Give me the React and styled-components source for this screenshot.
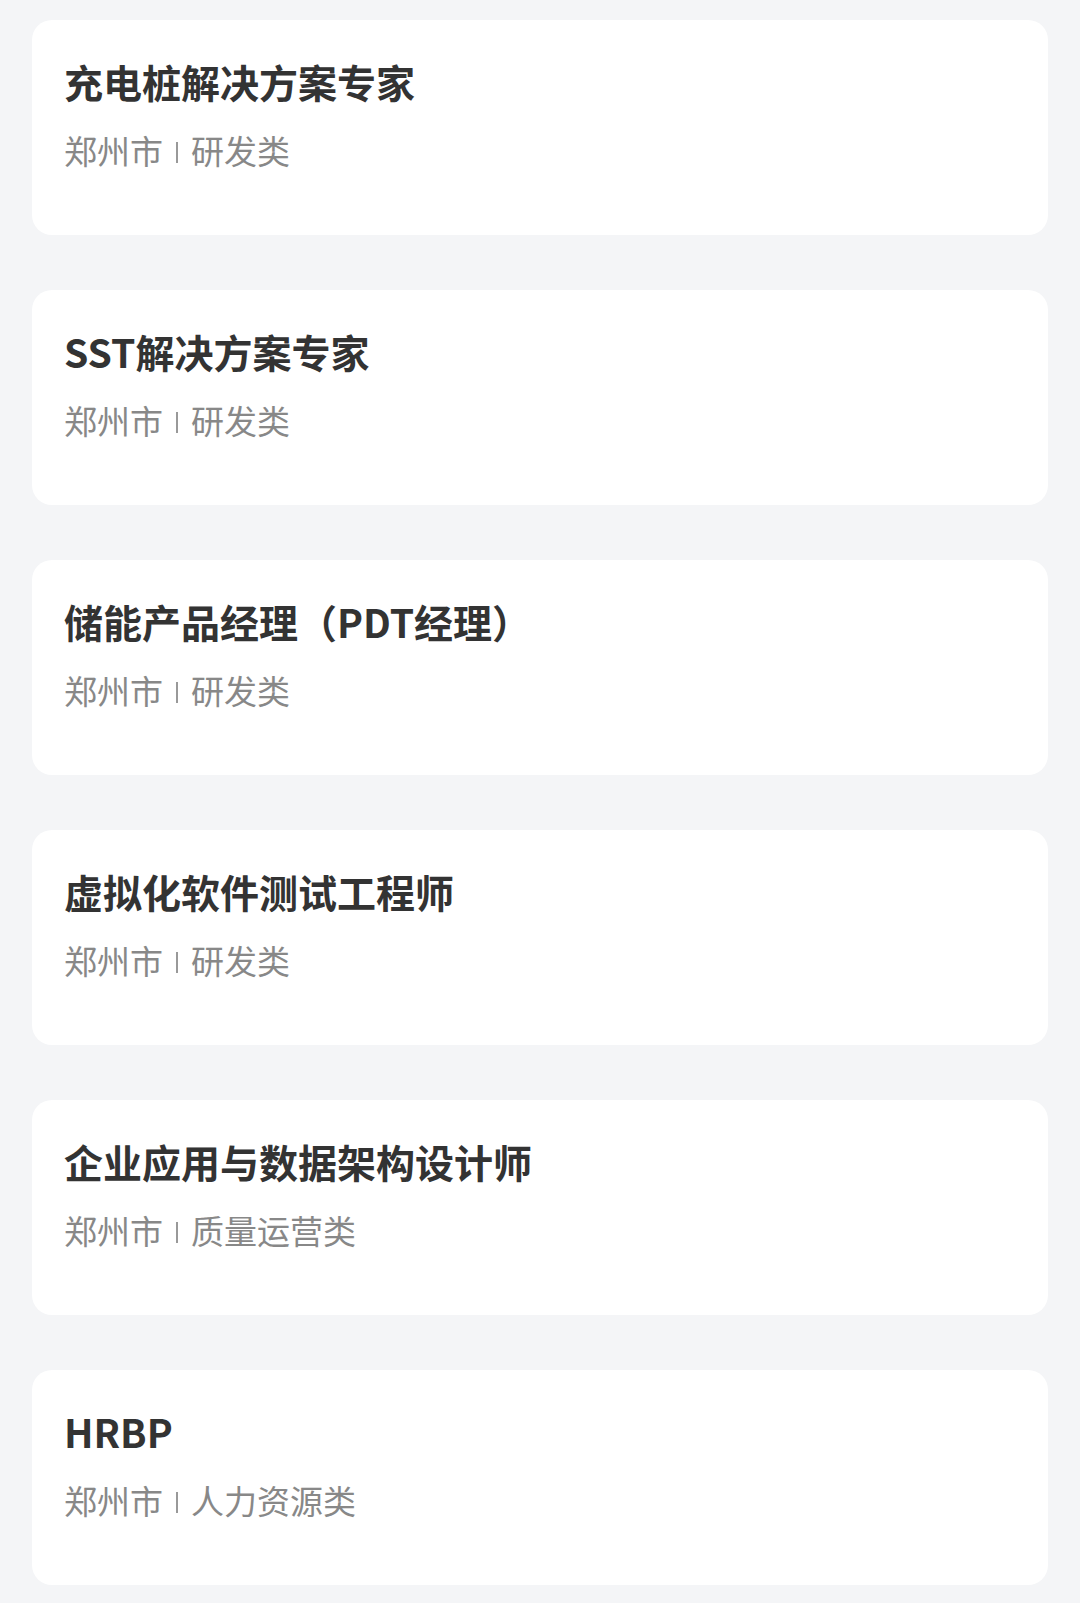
import React from "react";
import styled, { createGlobalStyle } from "styled-components";

const Global = createGlobalStyle`
  html, body { margin: 0; padding: 0; background: #f4f5f7; }
  body { font-family: "Noto Sans CJK SC", "Noto Sans", sans-serif; }
`;

const List = styled.div`
  display: flex;
  flex-direction: column;
  gap: 55px;
  padding: 20px 32px 20px;
`;

const Card = styled.div`
  background: #ffffff;
  border-radius: 20px;
  height: 215px;
  box-sizing: border-box;
  padding: 38px 32px 0;
  display: flex;
  flex-direction: column;
  gap: 26px;
`;

const Title = styled.div`
  font-size: 39px;
  line-height: 1.2;
  font-weight: 700;
  color: #333333;
`;

const Meta = styled.div`
  font-size: 33px;
  line-height: 1.2;
  font-weight: 400;
  color: #888888;
  display: flex;
  align-items: center;
`;

const Divider = styled.span`
  display: inline-block;
  width: 2px;
  height: 21px;
  background: #999999;
  margin: 3px 13px 0;
`;

const jobs = [
  { title: "充电桩解决方案专家", city: "郑州市", type: "研发类" },
  { title: "SST解决方案专家", city: "郑州市", type: "研发类" },
  { title: "储能产品经理（PDT经理）", city: "郑州市", type: "研发类" },
  { title: "虚拟化软件测试工程师", city: "郑州市", type: "研发类" },
  { title: "企业应用与数据架构设计师", city: "郑州市", type: "质量运营类" },
  { title: "HRBP", city: "郑州市", type: "人力资源类" },
];

export default function App() {
  return (
    <>
      <Global />
      <List>
        {jobs.map((j) => (
          <Card key={j.title}>
            <Title>{j.title}</Title>
            <Meta>
              <span>{j.city}</span>
              <Divider />
              <span>{j.type}</span>
            </Meta>
          </Card>
        ))}
      </List>
    </>
  );
}
